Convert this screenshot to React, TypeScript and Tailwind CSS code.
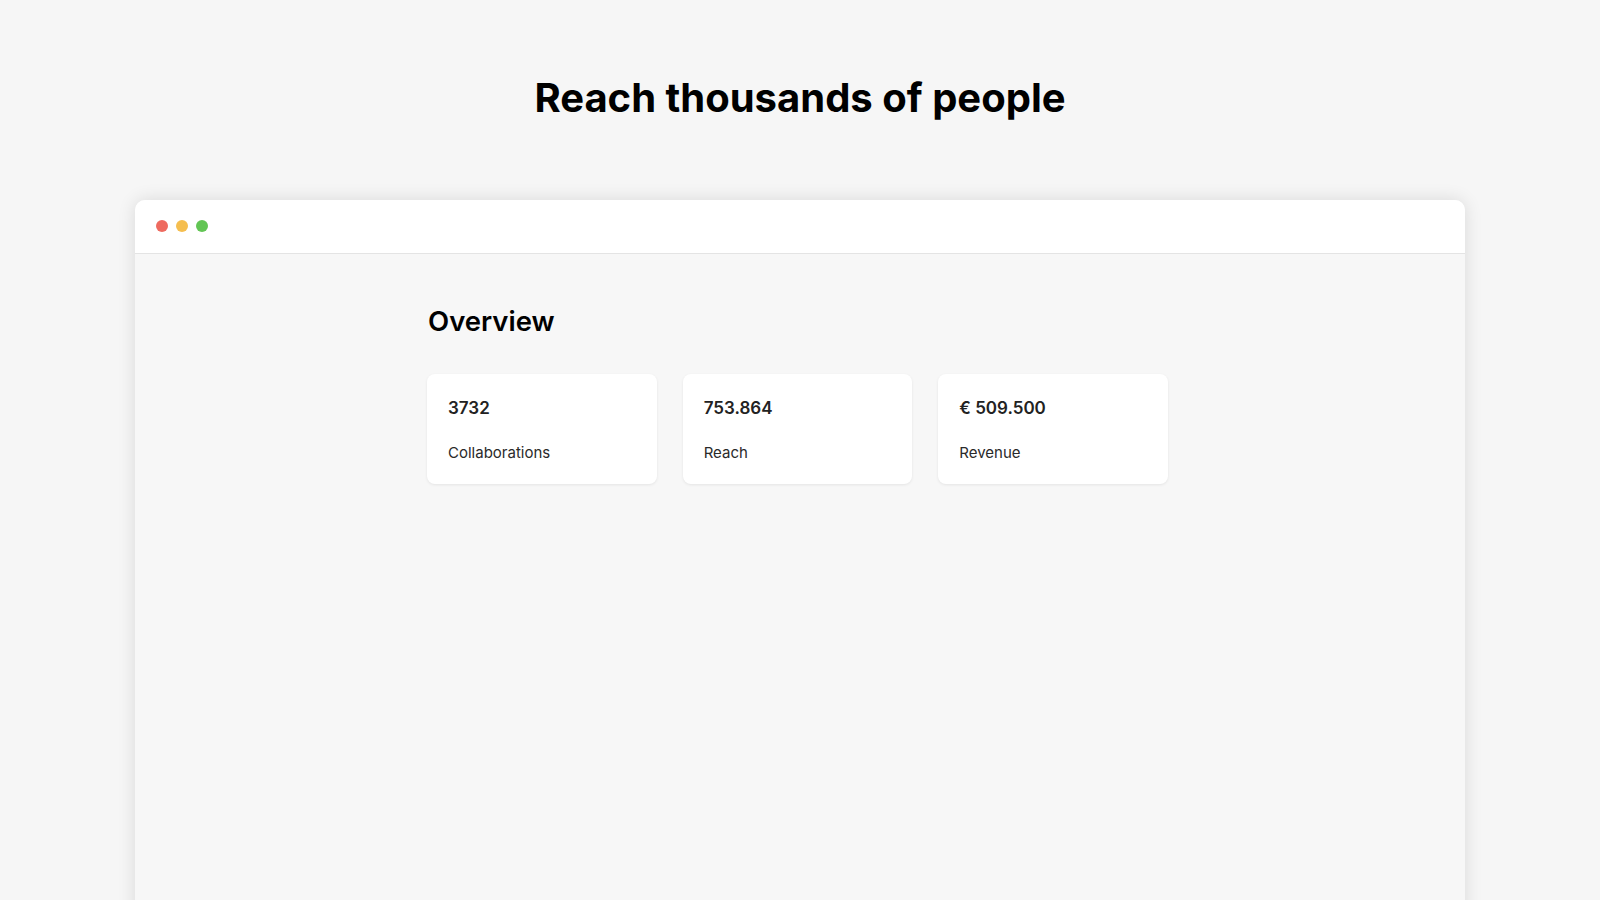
const stats = [
  { value: '3732', label: 'Collaborations' },
  { value: '753.864', label: 'Reach' },
  { value: '€ 509.500', label: 'Revenue' },
];

const App = () => {
  return (
    <div className="h-screen overflow-hidden bg-[#f6f6f6] font-['Inter',sans-serif] text-black">
      <h1 className="pt-[74px] text-center text-[40px] leading-[48px] font-bold">
        Reach thousands of people
      </h1>

      {/* Browser window */}
      <div className="mx-[135px] mt-[78px] h-[800px] rounded-t-[10px] bg-[#f7f7f7] shadow-[0_0_18px_rgba(0,0,0,0.12)]">
        <div className="flex h-[54px] items-center gap-2 rounded-t-[10px] border-b border-[#e4e4e4] bg-white pb-px pl-[21px]">
          <span className="h-3 w-3 rounded-full bg-[#ee6a5f]" />
          <span className="h-3 w-3 rounded-full bg-[#f5be4f]" />
          <span className="h-3 w-3 rounded-full bg-[#62c554]" />
        </div>

        <div className="ml-[292px] w-[741px] pt-[49px]">
          <h2 className="pl-px text-[27.5px] leading-[36px] font-semibold">Overview</h2>
          <div className="mt-[35px] grid grid-cols-3 gap-[26px]">
            {stats.map(stat => (
              <div
                key={stat.label}
                className="rounded-lg bg-white px-[21px] pt-[22px] pb-[21px] shadow-[0_1px_3px_rgba(0,0,0,0.08)]"
              >
                <div className="text-[17px] leading-[24px] font-semibold text-[#222]">{stat.value}</div>
                <div className="mt-[23px] text-[15px] leading-[20px] text-[#2a2a2a]">{stat.label}</div>
              </div>
            ))}
          </div>
        </div>
      </div>
    </div>
  );
};

export default App;
